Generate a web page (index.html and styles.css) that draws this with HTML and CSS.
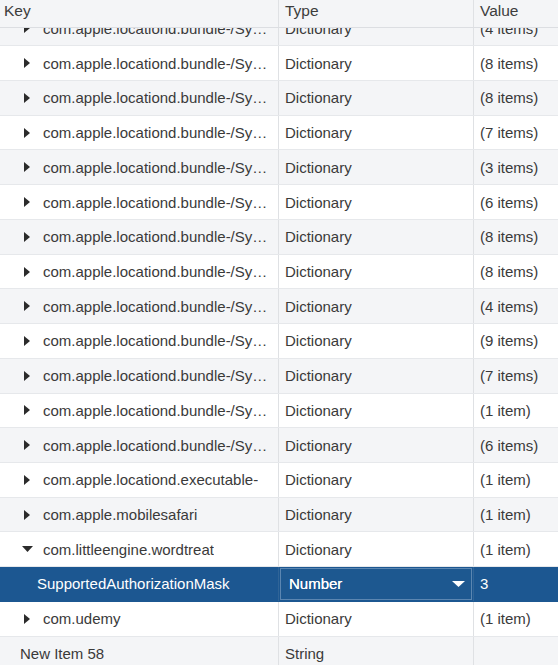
FILE: index.html
```html
<!DOCTYPE html>
<html>
<head>
<meta charset="utf-8">
<link rel="stylesheet" href="styles.css">
</head>
<body>
<div class="table">
  <div class="head">
    <div class="cell key-h">Key</div>
    <div class="cell">Type</div>
    <div class="cell">Value</div>
  </div>
  <div class="viewport">
    <div class="rows">
      <div class="row alt"><div class="cell key"><span class="tw"><svg class="tri-r" viewBox="0 0 6 10"><path d="M0 0L6 5L0 10Z"/></svg></span><span class="txt">com.apple.locationd.bundle-/System/Library</span></div><div class="cell">Dictionary</div><div class="cell">(4 items)</div></div>
      <div class="row"><div class="cell key"><span class="tw"><svg class="tri-r" viewBox="0 0 6 10"><path d="M0 0L6 5L0 10Z"/></svg></span><span class="txt">com.apple.locationd.bundle-/System/Library</span></div><div class="cell">Dictionary</div><div class="cell">(8 items)</div></div>
      <div class="row alt"><div class="cell key"><span class="tw"><svg class="tri-r" viewBox="0 0 6 10"><path d="M0 0L6 5L0 10Z"/></svg></span><span class="txt">com.apple.locationd.bundle-/System/Library</span></div><div class="cell">Dictionary</div><div class="cell">(8 items)</div></div>
      <div class="row"><div class="cell key"><span class="tw"><svg class="tri-r" viewBox="0 0 6 10"><path d="M0 0L6 5L0 10Z"/></svg></span><span class="txt">com.apple.locationd.bundle-/System/Library</span></div><div class="cell">Dictionary</div><div class="cell">(7 items)</div></div>
      <div class="row alt"><div class="cell key"><span class="tw"><svg class="tri-r" viewBox="0 0 6 10"><path d="M0 0L6 5L0 10Z"/></svg></span><span class="txt">com.apple.locationd.bundle-/System/Library</span></div><div class="cell">Dictionary</div><div class="cell">(3 items)</div></div>
      <div class="row"><div class="cell key"><span class="tw"><svg class="tri-r" viewBox="0 0 6 10"><path d="M0 0L6 5L0 10Z"/></svg></span><span class="txt">com.apple.locationd.bundle-/System/Library</span></div><div class="cell">Dictionary</div><div class="cell">(6 items)</div></div>
      <div class="row alt"><div class="cell key"><span class="tw"><svg class="tri-r" viewBox="0 0 6 10"><path d="M0 0L6 5L0 10Z"/></svg></span><span class="txt">com.apple.locationd.bundle-/System/Library</span></div><div class="cell">Dictionary</div><div class="cell">(8 items)</div></div>
      <div class="row"><div class="cell key"><span class="tw"><svg class="tri-r" viewBox="0 0 6 10"><path d="M0 0L6 5L0 10Z"/></svg></span><span class="txt">com.apple.locationd.bundle-/System/Library</span></div><div class="cell">Dictionary</div><div class="cell">(8 items)</div></div>
      <div class="row alt"><div class="cell key"><span class="tw"><svg class="tri-r" viewBox="0 0 6 10"><path d="M0 0L6 5L0 10Z"/></svg></span><span class="txt">com.apple.locationd.bundle-/System/Library</span></div><div class="cell">Dictionary</div><div class="cell">(4 items)</div></div>
      <div class="row"><div class="cell key"><span class="tw"><svg class="tri-r" viewBox="0 0 6 10"><path d="M0 0L6 5L0 10Z"/></svg></span><span class="txt">com.apple.locationd.bundle-/System/Library</span></div><div class="cell">Dictionary</div><div class="cell">(9 items)</div></div>
      <div class="row alt"><div class="cell key"><span class="tw"><svg class="tri-r" viewBox="0 0 6 10"><path d="M0 0L6 5L0 10Z"/></svg></span><span class="txt">com.apple.locationd.bundle-/System/Library</span></div><div class="cell">Dictionary</div><div class="cell">(7 items)</div></div>
      <div class="row"><div class="cell key"><span class="tw"><svg class="tri-r" viewBox="0 0 6 10"><path d="M0 0L6 5L0 10Z"/></svg></span><span class="txt">com.apple.locationd.bundle-/System/Library</span></div><div class="cell">Dictionary</div><div class="cell">(1 item)</div></div>
      <div class="row alt"><div class="cell key"><span class="tw"><svg class="tri-r" viewBox="0 0 6 10"><path d="M0 0L6 5L0 10Z"/></svg></span><span class="txt">com.apple.locationd.bundle-/System/Library</span></div><div class="cell">Dictionary</div><div class="cell">(6 items)</div></div>
      <div class="row"><div class="cell key"><span class="tw"><svg class="tri-r" viewBox="0 0 6 10"><path d="M0 0L6 5L0 10Z"/></svg></span><span class="txt">com.apple.locationd.executable-</span></div><div class="cell">Dictionary</div><div class="cell">(1 item)</div></div>
      <div class="row alt"><div class="cell key"><span class="tw"><svg class="tri-r" viewBox="0 0 6 10"><path d="M0 0L6 5L0 10Z"/></svg></span><span class="txt">com.apple.mobilesafari</span></div><div class="cell">Dictionary</div><div class="cell">(1 item)</div></div>
      <div class="row"><div class="cell key"><span class="tw"><svg class="tri-d" viewBox="0 0 11 6"><path d="M0 0L11 0L5.5 6Z"/></svg></span><span class="txt">com.littleengine.wordtreat</span></div><div class="cell">Dictionary</div><div class="cell">(1 item)</div></div>
      <div class="row selected"><div class="cell key child"><span class="txt">SupportedAuthorizationMask</span></div><div class="cell type-edit"><div class="select"><span>Number</span><svg class="dd" viewBox="0 0 13 6"><path d="M0 0L13 0L6.5 6Z"/></svg></div></div><div class="cell">3</div></div>
      <div class="row"><div class="cell key"><span class="tw"><svg class="tri-r" viewBox="0 0 6 10"><path d="M0 0L6 5L0 10Z"/></svg></span><span class="txt">com.udemy</span></div><div class="cell">Dictionary</div><div class="cell">(1 item)</div></div>
      <div class="row alt"><div class="cell key root"><span class="txt">New Item 58</span></div><div class="cell">String</div><div class="cell"></div></div>
    </div>
  </div>
</div>
</body>
</html>
```

FILE: styles.css
```css
html, body {
  margin: 0;
  padding: 0;
  background: #ffffff;
}

body {
  font-family: "Liberation Sans", Arial, sans-serif;
  font-size: 15px;
  color: #3a3a3a;
  width: 558px;
  height: 665px;
  overflow: hidden;
}

.table {
  display: flex;
  flex-direction: column;
  height: 665px;
}

.head {
  display: grid;
  grid-template-columns: 279px 195px 1fr;
  height: 28px;
  box-sizing: border-box;
  background: #f4f5f7;
  border-bottom: 1px solid #dcdee2;
  position: relative;
  z-index: 1;
}

.head .cell {
  padding: 0 0 0 6px;
  align-items: flex-start;
  padding-top: 2px;
  font-size: 15.5px;
  color: #3d3d3d;
}

.head .key-h {
  padding-left: 4px;
}

.viewport {
  flex: 1;
  overflow: hidden;
}

.rows {
  margin-top: -16.4px;
}

.row {
  display: grid;
  grid-template-columns: 279px 195px 1fr;
  height: 34.72px;
  box-sizing: border-box;
  border-bottom: 1px solid #e6e8eb;
  background: #ffffff;
}

.row.alt {
  background: #f4f5f7;
}

.cell {
  display: flex;
  align-items: center;
  padding-left: 6px;
  border-right: 1px solid #dfe1e4;
  min-width: 0;
  overflow: hidden;
  white-space: nowrap;
}

.cell:last-child {
  border-right: none;
}

.key {
  padding-left: 22px;
  padding-right: 6px;
}

.key.child {
  padding-left: 37px;
}

.key.root {
  padding-left: 20px;
}

.tw {
  flex: 0 0 21px;
  display: flex;
  align-items: center;
}

.tri-r {
  width: 6px;
  height: 10px;
  margin-left: 2px;
  fill: #2b2b2b;
}

.tri-d {
  width: 11px;
  height: 6px;
  fill: #2b2b2b;
}

.txt {
  overflow: hidden;
  text-overflow: ellipsis;
  white-space: nowrap;
  min-width: 0;
}

.row.selected {
  background: #1c5791;
  color: #ffffff;
  border-bottom-color: #1c5791;
}

.row.selected .cell {
  border-right-color: #2f6497;
}

.type-edit {
  padding: 1px 1px 1px 1px;
}

.select {
  flex: 1;
  align-self: stretch;
  display: flex;
  align-items: center;
  justify-content: space-between;
  border: 1px solid #5b86b1;
  background: #1d5890;
  padding: 0 6px 0 8px;
  box-sizing: border-box;
  font-size: 15px;
}

.select span {
  text-shadow: 0 0 0.5px #ffffff;
}

.dd {
  width: 13px;
  height: 6px;
  fill: #ffffff;
}
```
